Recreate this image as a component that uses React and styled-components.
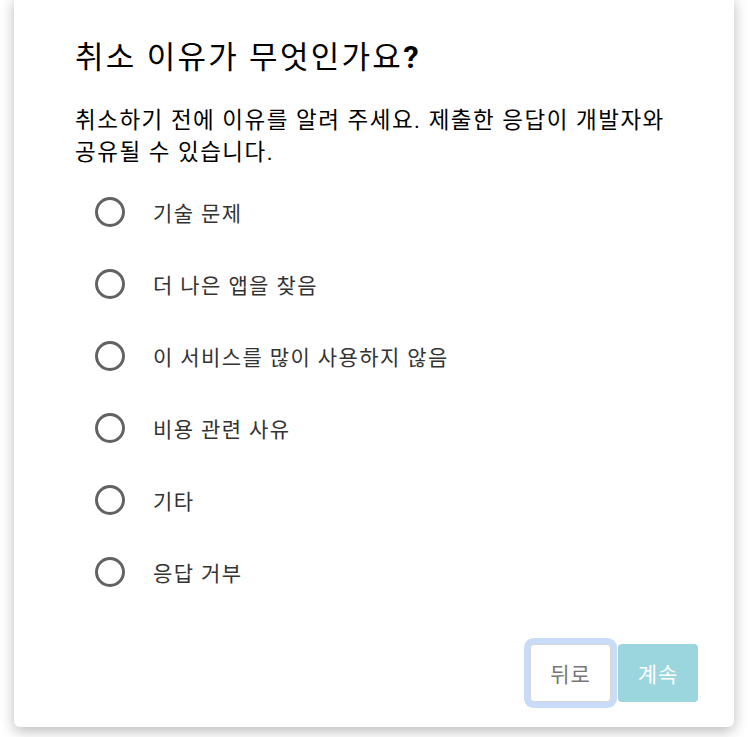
import { useState } from "react";
import styled, { createGlobalStyle } from "styled-components";

const GlobalStyle = createGlobalStyle`
  html, body {
    margin: 0;
    padding: 0;
    background: #ffffff;
    overflow: hidden;
  }
  body {
    font-family: "Roboto", "Noto Sans CJK KR", sans-serif;
    word-break: keep-all;
  }
`;

const Page = styled.div`
  width: 750px;
  height: 737px;
  overflow: hidden;
`;

const Card = styled.div`
  box-sizing: border-box;
  margin: -4px 16px 0 14px;
  height: 731px;
  background: #ffffff;
  border-radius: 6px;
  box-shadow: 0 4px 14px rgba(0, 0, 0, 0.28);
  padding: 42px 36px 25px 61px;
  display: flex;
  flex-direction: column;
`;

const Title = styled.h1`
  margin: 0;
  font-size: 31px;
  line-height: 40px;
  font-weight: 400;
  letter-spacing: 2.3px;
  color: #000000;
`;

const Mark = styled.span`
  font-weight: 700;
`;

const Description = styled.p`
  margin: 26px 20px 0 0;
  font-size: 22.5px;
  line-height: 32px;
  letter-spacing: 1.5px;
  color: #000000;
`;

/* 선택지 목록 */
const OptionList = styled.div`
  margin-top: 8px;
  display: flex;
  flex-direction: column;
`;

const Option = styled.label`
  height: 72px;
  display: flex;
  align-items: center;
  padding-left: 20px;
  gap: 28px;
  cursor: pointer;
  font-size: 21px;
  letter-spacing: 1.4px;
  color: #333333;
`;

const Radio = styled.span`
  box-sizing: border-box;
  width: 30px;
  height: 30px;
  border-radius: 50%;
  border: 3px solid #626262;
  display: flex;
  align-items: center;
  justify-content: center;
  flex-shrink: 0;

  &::after {
    content: "";
    width: 14px;
    height: 14px;
    border-radius: 50%;
    background: #626262;
    display: ${({ checked }) => (checked ? "block" : "none")};
  }
`;

const Actions = styled.div`
  margin-top: auto;
  display: flex;
  justify-content: flex-end;
  gap: 7px;
`;

const Button = styled.button`
  box-sizing: border-box;
  width: ${({ primary }) => (primary ? "80px" : "81px")};
  height: 58px;
  border-radius: 4px;
  font-family: "Roboto", "Noto Sans CJK KR", sans-serif;
  font-size: 21px;
  letter-spacing: 1px;
  cursor: pointer;
  border: ${({ primary }) => (primary ? "none" : "1px solid #d6d6d6")};
  background: ${({ primary }) => (primary ? "#9bd5de" : "#ffffff")};
  color: ${({ primary }) => (primary ? "#ffffff" : "#767676")};
  box-shadow: ${({ focused }) => (focused ? "0 0 0 6px #c8dcf8" : "none")};
  outline: none;
`;

const reasons = [
  "기술 문제",
  "더 나은 앱을 찾음",
  "이 서비스를 많이 사용하지 않음",
  "비용 관련 사유",
  "기타",
  "응답 거부",
];

export default function App() {
  const [selected, setSelected] = useState(null);

  return (
    <Page>
      <GlobalStyle />
      <Card>
        <Title>
          취소 이유가 무엇인가요<Mark>?</Mark>
        </Title>
        <Description>
          취소하기 전에 이유를 알려 주세요. 제출한 응답이 개발자와 공유될 수
          있습니다.
        </Description>
        <OptionList>
          {reasons.map((reason) => (
            <Option key={reason} onClick={() => setSelected(reason)}>
              <Radio checked={selected === reason} />
              {reason}
            </Option>
          ))}
        </OptionList>
        <Actions>
          <Button focused>뒤로</Button>
          <Button primary>계속</Button>
        </Actions>
      </Card>
    </Page>
  );
}
